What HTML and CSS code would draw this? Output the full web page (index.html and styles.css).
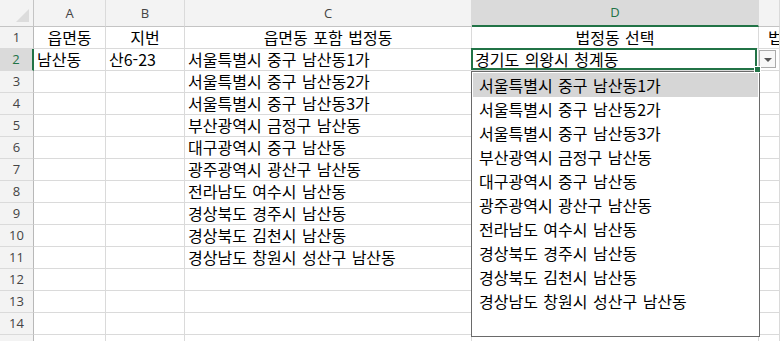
FILE: index.html
```html
<!DOCTYPE html>
<html lang="ko">

<head>
  <meta charset="UTF-8">
  <title>법정동 선택</title>
  <link rel="stylesheet" href="styles.css">
</head>

<body>
  <div class="sheet">
    <div class="corner"></div>
    <div class="col-head">A</div>
    <div class="col-head">B</div>
    <div class="col-head">C</div>
    <div class="col-head sel">D</div>
    <div class="col-head"></div>

    <div class="row-head">1</div>
    <div class="cell center">읍면동</div>
    <div class="cell center">지번</div>
    <div class="cell center">읍면동 포함 법정동</div>
    <div class="cell center">법정동 선택</div>
    <div class="cell clip e1">법</div>

    <div class="row-head sel">2</div>
    <div class="cell">남산동</div>
    <div class="cell">산6-23</div>
    <div class="cell">서울특별시 중구 남산동1가</div>
    <div class="cell active">경기도 의왕시 청계동</div>
    <div class="cell clip">4</div>

    <div class="row-head">3</div>
    <div class="cell"></div>
    <div class="cell"></div>
    <div class="cell">서울특별시 중구 남산동2가</div>
    <div class="cell"></div>
    <div class="cell"></div>

    <div class="row-head">4</div>
    <div class="cell"></div>
    <div class="cell"></div>
    <div class="cell">서울특별시 중구 남산동3가</div>
    <div class="cell"></div>
    <div class="cell"></div>

    <div class="row-head">5</div>
    <div class="cell"></div>
    <div class="cell"></div>
    <div class="cell">부산광역시 금정구 남산동</div>
    <div class="cell"></div>
    <div class="cell"></div>

    <div class="row-head">6</div>
    <div class="cell"></div>
    <div class="cell"></div>
    <div class="cell">대구광역시 중구 남산동</div>
    <div class="cell"></div>
    <div class="cell"></div>

    <div class="row-head">7</div>
    <div class="cell"></div>
    <div class="cell"></div>
    <div class="cell">광주광역시 광산구 남산동</div>
    <div class="cell"></div>
    <div class="cell"></div>

    <div class="row-head">8</div>
    <div class="cell"></div>
    <div class="cell"></div>
    <div class="cell">전라남도 여수시 남산동</div>
    <div class="cell"></div>
    <div class="cell"></div>

    <div class="row-head">9</div>
    <div class="cell"></div>
    <div class="cell"></div>
    <div class="cell">경상북도 경주시 남산동</div>
    <div class="cell"></div>
    <div class="cell"></div>

    <div class="row-head">10</div>
    <div class="cell"></div>
    <div class="cell"></div>
    <div class="cell">경상북도 김천시 남산동</div>
    <div class="cell"></div>
    <div class="cell"></div>

    <div class="row-head">11</div>
    <div class="cell"></div>
    <div class="cell"></div>
    <div class="cell">경상남도 창원시 성산구 남산동</div>
    <div class="cell"></div>
    <div class="cell"></div>

    <div class="row-head">12</div>
    <div class="cell"></div>
    <div class="cell"></div>
    <div class="cell"></div>
    <div class="cell"></div>
    <div class="cell"></div>

    <div class="row-head">13</div>
    <div class="cell"></div>
    <div class="cell"></div>
    <div class="cell"></div>
    <div class="cell"></div>
    <div class="cell"></div>

    <div class="row-head">14</div>
    <div class="cell"></div>
    <div class="cell"></div>
    <div class="cell"></div>
    <div class="cell"></div>
    <div class="cell"></div>

    <div class="row-head"></div>
    <div class="cell"></div>
    <div class="cell"></div>
    <div class="cell"></div>
    <div class="cell"></div>
    <div class="cell"></div>

    <!-- data validation dropdown for D2 -->
    <a class="drop-btn" href="javascript:;"></a>
    <ul class="drop-list">
      <li class="cur">서울특별시 중구 남산동1가</li>
      <li>서울특별시 중구 남산동2가</li>
      <li>서울특별시 중구 남산동3가</li>
      <li>부산광역시 금정구 남산동</li>
      <li>대구광역시 중구 남산동</li>
      <li>광주광역시 광산구 남산동</li>
      <li>전라남도 여수시 남산동</li>
      <li>경상북도 경주시 남산동</li>
      <li>경상북도 김천시 남산동</li>
      <li>경상남도 창원시 성산구 남산동</li>
    </ul>
  </div>
</body>

</html>
```

FILE: styles.css
```css
html,
body {
  margin: 0;
  padding: 0;
  background-color: #fff;
  overflow: hidden;
}

ul {
  list-style: none;
  padding: 0;
  margin: 0;
}

a {
  text-decoration: none;
}

.sheet {
  position: relative;
  display: grid;
  grid-template-columns: 34px 72px 79px 287px 287px 1fr;
  grid-template-rows: 27px repeat(15, 22px);
  font-family: "Noto Sans CJK KR", "Noto Sans", sans-serif;
  color: #000;
}

.sheet > div {
  box-sizing: border-box;
  border-right: 1px solid #dadada;
  border-bottom: 1px solid #dadada;
  white-space: nowrap;
}

.corner,
.col-head,
.row-head {
  background-color: #f3f3f3;
  font-family: "Open Sans", "Noto Sans", sans-serif;
  font-size: 13px;
  color: #444;
  text-align: center;
}

.sheet > .corner {
  position: relative;
  border-right-color: #c4c4c4;
  border-bottom-color: #c4c4c4;
}

.corner::after {
  content: '';
  position: absolute;
  right: 4px;
  bottom: 4px;
  border-left: 13px solid transparent;
  border-bottom: 13px solid #dcdcdc;
}

.col-head {
  line-height: 26px;
}

.sheet > .col-head {
  border-bottom-color: #c4c4c4;
}

.sheet > .col-head.sel {
  background-color: #dadada;
  color: #217346;
  border-bottom: 2px solid #217346;
  line-height: 25px;
}

.row-head {
  line-height: 21px;
}

.sheet > .row-head {
  border-right-color: #b8b8b8;
}

.sheet > .row-head.sel {
  background-color: #dadada;
  color: #217346;
  border-right: 2px solid #217346;
}

.cell {
  padding: 0 3px;
  font-size: 16px;
  line-height: 21px;
  word-spacing: 1px;
}

.center {
  text-align: center;
}

.clip {
  overflow: hidden;
}

.e1 {
  padding-left: 9px;
}

.sheet > .cell.active {
  position: relative;
  z-index: 3;
}

.active::after {
  content: '';
  position: absolute;
  left: -1px;
  top: -1px;
  right: 1px;
  bottom: 0;
  border: 2px solid #217346;
}

.active::before {
  content: '';
  position: absolute;
  right: -3px;
  bottom: -3px;
  width: 5px;
  height: 5px;
  background-color: #217346;
  border: 1px solid #fff;
  z-index: 1;
}

.drop-btn {
  position: absolute;
  left: 759px;
  top: 50px;
  width: 17px;
  height: 18px;
  box-sizing: border-box;
  border: 1px solid #ababab;
  background-color: #f8f8f8;
  z-index: 2;
}

.drop-btn::after {
  content: '';
  position: absolute;
  left: 4px;
  top: 7px;
  border-left: 4px solid transparent;
  border-right: 4px solid transparent;
  border-top: 4px solid #555;
}

ul.drop-list {
  position: absolute;
  left: 471px;
  top: 71px;
  width: 289px;
  height: 266px;
  box-sizing: border-box;
  padding: 1px;
  border: 1px solid #6a6a6a;
  background-color: #fff;
  font-size: 16px;
  word-spacing: 1px;
  z-index: 2;
}

ul.drop-list li {
  height: 24px;
  line-height: 24px;
  padding-left: 6px;
  white-space: nowrap;
}

ul.drop-list li.cur {
  background-color: #d6d6d6;
}
```
